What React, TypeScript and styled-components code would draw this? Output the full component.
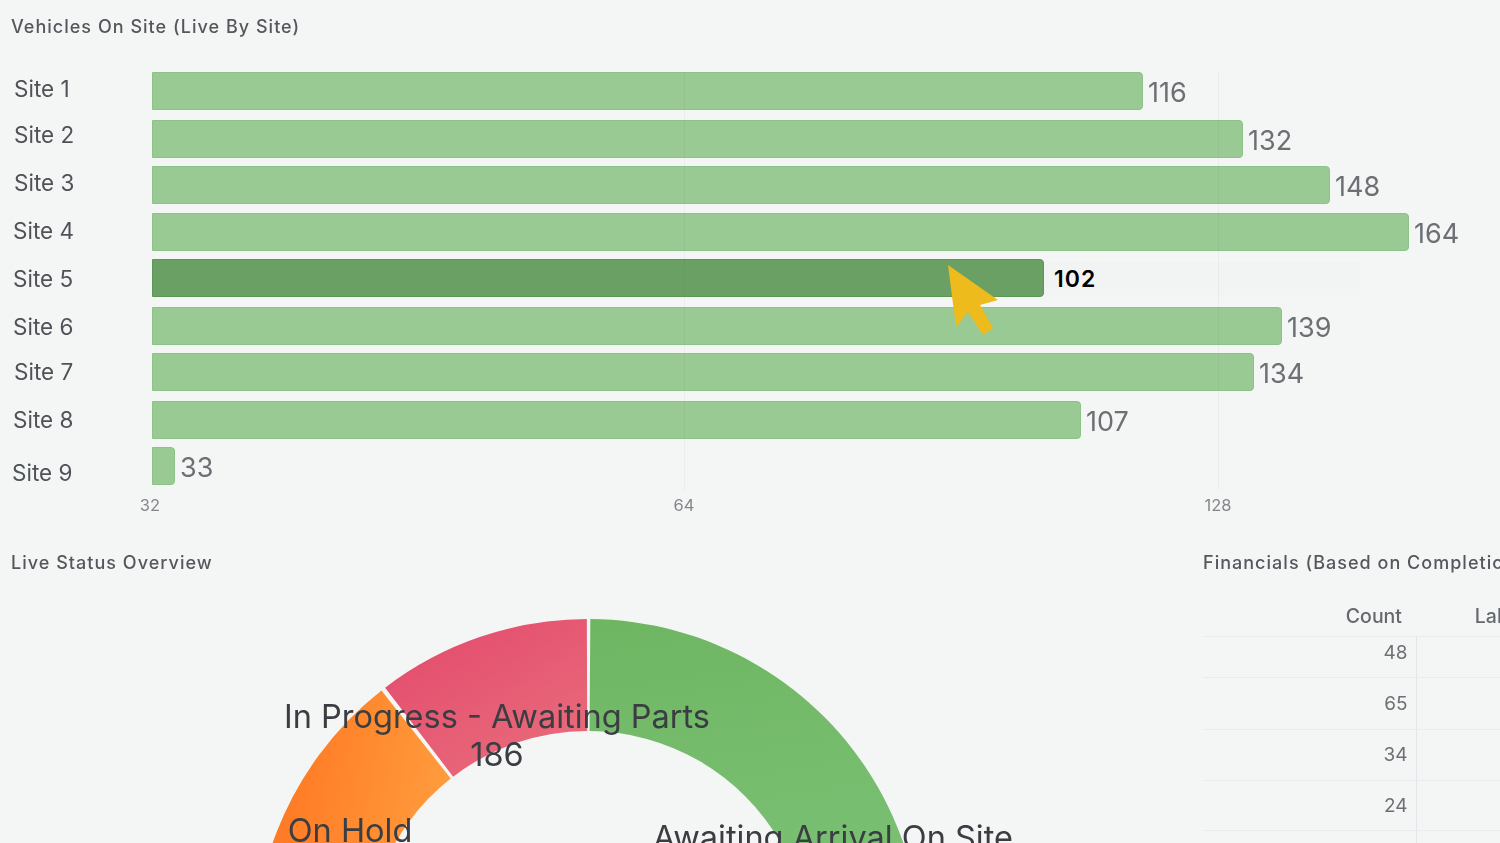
import styled, { createGlobalStyle } from 'styled-components';

const GlobalStyle = createGlobalStyle`
  html, body {
    margin: 0;
    padding: 0;
    background: #f4f6f5;
    font-family: Inter, "Liberation Sans", sans-serif;
  }
`;

const Page = styled.div`
  position: relative;
  width: 1500px;
  height: 843px;
  overflow: hidden;
  background: #f4f6f5;
`;

const SectionTitle = styled.h2`
  margin: 0;
  font-size: 18px;
  line-height: 24px;
  font-weight: 500;
  letter-spacing: 1.02px;
  color: #54585d;
  white-space: nowrap;
  filter: blur(0.7px);
`;

const TopSection = styled.section`
  padding: 15px 0 0 11px;
  height: 536px;
  box-sizing: border-box;
`;

const Plot = styled.div`
  position: relative;
  margin: 0 0 0 -11px;
  padding-top: 33px;
`;

const GridLine = styled.div<{ $x: number }>`
  position: absolute;
  top: 33px;
  left: ${(p) => p.$x}px;
  width: 1px;
  height: 418px;
  background: rgba(60, 70, 60, 0.05);
  z-index: 2;
`;

const Row = styled.div<{ $gap: number; $active?: boolean }>`
  position: relative;
  display: flex;
  align-items: flex-start;
  height: 38px;
  margin-top: ${(p) => p.$gap}px;

  ${(p) =>
    p.$active &&
    `
    &::before {
      content: '';
      position: absolute;
      left: 152px;
      top: 3px;
      width: 1208px;
      height: 33px;
      background: #f2f4f3;
    }
  `}
`;

const SiteLabel = styled.div<{ $shift: number; $inset: number }>`
  flex: none;
  width: ${(p) => 152 - p.$inset}px;
  margin-top: ${(p) => p.$shift}px;
  padding-left: ${(p) => p.$inset}px;
  font-size: 22.5px;
  line-height: 26px;
  color: #4f5358;
  filter: blur(0.7px);
`;

const Bar = styled.div<{ $active?: boolean }>`
  position: relative;
  flex: none;
  box-sizing: border-box;
  height: 38px;
  border: 1.5px solid ${(p) => (p.$active ? '#5b9755' : '#8cc487')};
  border-left-width: 1px;
  border-radius: 0 4px 4px 0;
  background: ${(p) => (p.$active ? '#6ba065' : '#9aca94')};
`;

const Value = styled.div<{ $active?: boolean }>`
  position: relative;
  margin-left: ${(p) => (p.$active ? 10 : 5)}px;
  margin-top: ${(p) => (p.$active ? 7 : 4)}px;
  font-size: ${(p) => (p.$active ? 23 : 27)}px;
  font-weight: ${(p) => (p.$active ? 600 : 400)};
  letter-spacing: ${(p) => (p.$active ? 1 : 0)}px;
  line-height: ${(p) => (p.$active ? 26 : 34)}px;
  color: ${(p) => (p.$active ? '#000' : '#6c7075')};
  ${(p) => !p.$active && 'filter: blur(0.7px);'}
`;

const Axis = styled.div`
  display: flex;
  margin-top: 10px;
  padding-left: 150px;
`;

const Tick = styled.div`
  flex: none;
  width: 534px;
  font-size: 16.5px;
  line-height: 20px;
  color: #83878b;
  filter: blur(0.6px);

  span {
    display: inline-block;
    transform: translateX(-50%);
  }
`;

const BottomSection = styled.section`
  display: flex;
  padding-top: 15px;
`;

const OverviewColumn = styled.div`
  flex: none;
  width: 1192px;
  padding-left: 11px;
`;

const DonutSvg = styled.svg`
  display: block;
  margin: 0 0 0 -11px;
  overflow: visible;
`;

const DonutText = styled.text`
  font-family: Inter, "Liberation Sans", sans-serif;
  font-size: 32.5px;
  fill: #3a3d42;
  filter: blur(0.7px);
`;

const FinancialsColumn = styled.div`
  flex: none;
  width: 297px;
  overflow: hidden;
`;

const Table = styled.table`
  width: 351px;
  margin-top: 21px;
  border-collapse: collapse;
  table-layout: fixed;
  font-size: 19px;
  color: #6c7075;
`;

const HeadCell = styled.th<{ $width: number }>`
  width: ${(p) => p.$width}px;
  height: 40px;
  padding: 0 14px 0 0;
  box-sizing: border-box;
  border-bottom: 1px solid #e8ecef;
  text-align: right;
  font-size: 19.5px;
  font-weight: 500;
  white-space: nowrap;
  color: #65696e;

  span {
    filter: blur(0.7px);
    display: inline-block;
  }
`;

const CountCell = styled.td<{ $height: number; $lift?: number }>`
  height: ${(p) => p.$height}px;
  padding: 0 8px ${(p) => p.$lift ?? 0}px 0;
  box-sizing: border-box;
  border-bottom: 1px solid #e8ecef;
  border-right: 1px solid #e2e5ea;
  text-align: right;

  span {
    filter: blur(0.7px);
    display: inline-block;
  }
`;

const BlankCell = styled.td`
  border-bottom: 1px solid #e8ecef;
`;

const Cursor = styled.svg`
  position: absolute;
  left: 940px;
  top: 260px;
  z-index: 3;
`;

const sites = [
  { name: 'Site 1', value: 116, end: 1143, gap: 0, shift: 4, inset: 14 },
  { name: 'Site 2', value: 132, end: 1243, gap: 10, shift: 2, inset: 14 },
  { name: 'Site 3', value: 148, end: 1330, gap: 8, shift: 4, inset: 14 },
  { name: 'Site 4', value: 164, end: 1409, gap: 9, shift: 5, inset: 13 },
  { name: 'Site 5', value: 102, end: 1044, gap: 8, shift: 7, inset: 13, active: true },
  { name: 'Site 6', value: 139, end: 1282, gap: 10, shift: 7, inset: 13 },
  { name: 'Site 7', value: 134, end: 1254, gap: 8, shift: 6, inset: 14 },
  { name: 'Site 8', value: 107, end: 1081, gap: 10, shift: 6, inset: 13 },
  { name: 'Site 9', value: 33, end: 175, gap: 8, shift: 13, inset: 12 },
];

const ticks = [32, 64, 128];

const counts = [
  { value: 48, height: 41, lift: 8 },
  { value: 65, height: 52 },
  { value: 34, height: 51 },
  { value: 24, height: 50 },
];

// donut centre sits below the fold, so only the upper arcs show
const cx = 588;
const cy = 378;
const outer = 334;
const inner = 222;

function polar(radius: number, deg: number) {
  const rad = ((deg - 90) * Math.PI) / 180;
  return `${(cx + radius * Math.cos(rad)).toFixed(2)} ${(cy + radius * Math.sin(rad)).toFixed(2)}`;
}

function arc(from: number, to: number) {
  return `M${polar(outer, from)} A${outer} ${outer} 0 0 1 ${polar(outer, to)} L${polar(inner, to)} A${inner} ${inner} 0 0 0 ${polar(inner, from)} Z`;
}

function App() {
  return (
    <Page>
      <GlobalStyle />
      <TopSection>
        <SectionTitle>Vehicles On Site (Live By Site)</SectionTitle>
        <Plot>
          <GridLine $x={684} />
          <GridLine $x={1218} />
          {sites.map((site) => (
            <Row key={site.name} $gap={site.gap} $active={site.active}>
              <SiteLabel $shift={site.shift} $inset={site.inset}>
                {site.name}
              </SiteLabel>
              <Bar $active={site.active} style={{ width: site.end - 152 }} />
              <Value $active={site.active}>{site.value}</Value>
            </Row>
          ))}
          <Axis>
            {ticks.map((tick) => (
              <Tick key={tick}>
                <span>{tick}</span>
              </Tick>
            ))}
          </Axis>
        </Plot>
      </TopSection>
      <BottomSection>
        <OverviewColumn>
          <SectionTitle>Live Status Overview</SectionTitle>
          <DonutSvg width="1200" height="270" viewBox="0 0 1200 270">
            <defs>
              <linearGradient id="green" x1="0.2" y1="0" x2="0.3" y2="1">
                <stop offset="0" stopColor="#6fb663" />
                <stop offset="0.6" stopColor="#7bc175" />
                <stop offset="1" stopColor="#6fb766" />
              </linearGradient>
              <linearGradient id="red" x1="0.2" y1="0.2" x2="0.8" y2="1">
                <stop offset="0" stopColor="#e4506f" />
                <stop offset="1" stopColor="#e96c7b" />
              </linearGradient>
              <linearGradient id="orange" x1="0" y1="0.3" x2="1" y2="0.6">
                <stop offset="0" stopColor="#ff7420" />
                <stop offset="1" stopColor="#ffa040" />
              </linearGradient>
            </defs>
            <path d={arc(0.4, 120)} fill="url(#green)" />
            <path d={arc(-37.4, -0.2)} fill="url(#red)" />
            <path d={arc(-100, -38.2)} fill="url(#orange)" />
            <DonutText x="497" y="153" textAnchor="middle">
              In Progress - Awaiting Parts
            </DonutText>
            <DonutText x="497" y="191" textAnchor="middle">
              186
            </DonutText>
            <DonutText x="350" y="267" textAnchor="middle">
              On Hold
            </DonutText>
            <DonutText x="833" y="274" textAnchor="middle">
              Awaiting Arrival On Site
            </DonutText>
          </DonutSvg>
        </OverviewColumn>
        <FinancialsColumn>
          <SectionTitle>Financials (Based on Completion)</SectionTitle>
          <Table>
            <thead>
              <tr>
                <HeadCell $width={213}>
                  <span>Count</span>
                </HeadCell>
                <HeadCell $width={138}>
                  <span>Labour</span>
                </HeadCell>
              </tr>
            </thead>
            <tbody>
              {counts.map((row) => (
                <tr key={row.value}>
                  <CountCell $height={row.height} $lift={row.lift}>
                    <span>{row.value}</span>
                  </CountCell>
                  <BlankCell />
                </tr>
              ))}
              <tr>
                <CountCell $height={40} />
                <BlankCell />
              </tr>
            </tbody>
          </Table>
        </FinancialsColumn>
      </BottomSection>
      <Cursor width="64" height="80" viewBox="940 260 64 80">
        <polygon
          points="948,265 998,300 980,305 993,328 983,335 968,312 956,327"
          fill="#edbb1c"
        />
      </Cursor>
    </Page>
  );
}

export default App;
